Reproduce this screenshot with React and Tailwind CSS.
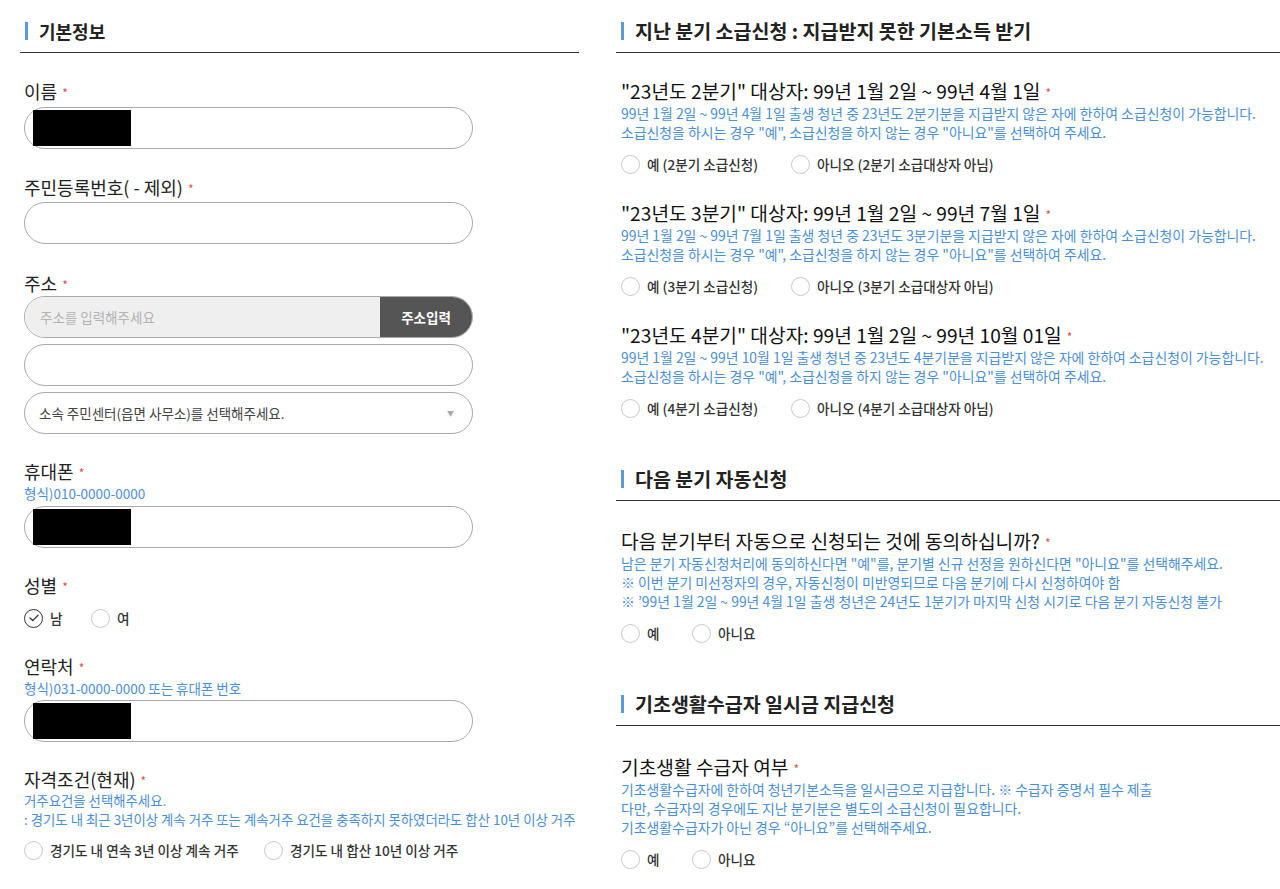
const FONT = { fontFamily: '"Noto Sans CJK KR", "Noto Sans", sans-serif' }

function Star() {
  return <span className="relative -top-[1px] ml-[5px] text-[12px] leading-none text-[#d9534f]">*</span>
}

function SectionHead({ title, size, className = '' }) {
  return (
    <div className={`border-b border-[#333] pb-[10px] ${className}`}>
      <div className="flex h-[22px] items-center">
        <div className="ml-[5px] h-[18px] w-[3px] bg-[#5b9bd5]" />
        <span className={`ml-[11px] font-bold leading-[22px] text-[#222] ${size}`}>{title}</span>
      </div>
    </div>
  )
}

function Radio({ label, checked, width }) {
  return (
    <div className="flex h-[20px] items-center" style={width ? { width } : undefined}>
      {checked ? (
        <div className="flex h-[19px] w-[19px] shrink-0 items-center justify-center rounded-full border border-[#333]">
          <svg width="10" height="8" viewBox="0 0 10 8" fill="none">
            <path d="M1 4l2.8 2.6L9 1.2" stroke="#333" strokeWidth="1.3" strokeLinecap="round" strokeLinejoin="round" />
          </svg>
        </div>
      ) : (
        <div className="h-[19px] w-[19px] shrink-0 rounded-full border border-[#c9c9c9]" />
      )}
      <span className="ml-[7px] whitespace-nowrap text-[13.6px] font-medium leading-[20px] text-[#333]">{label}</span>
    </div>
  )
}

function Hint({ lines, className = '' }) {
  return (
    <div className={`whitespace-nowrap leading-[19px] text-[#4a8fd8] ${className}`}>
      {lines.map(l => <div key={l}>{l}</div>)}
    </div>
  )
}

function Label({ text, className = '' }) {
  return (
    <div className={`h-[24px] text-[18px] leading-[24px] text-[#222] ${className}`}>
      {text}<Star />
    </div>
  )
}

function Masked({ className = '' }) {
  return (
    <div className={`flex h-[42px] w-[449px] items-center rounded-full border border-[#aaa] pl-[8px] ${className}`}>
      <div className="h-[36px] w-[98px] bg-black" />
    </div>
  )
}

function Empty({ className = '' }) {
  return <div className={`h-[42px] w-[449px] rounded-full border border-[#aaa] ${className}`} />
}

function Question({ text, hints, options, firstWidth, className = '' }) {
  return (
    <div className={className}>
      <div className="h-[26px] text-[19.2px] leading-[26px] text-[#111]">{text}<Star /></div>
      <Hint lines={hints} className="text-[13.9px]" />
      <div className="mt-[12px] flex">
        <Radio label={options[0]} width={firstWidth} />
        <Radio label={options[1]} />
      </div>
    </div>
  )
}

const quarters = [
  { q: '2', end: '4월 1일', hintEnd: '4월 1일' },
  { q: '3', end: '7월 1일', hintEnd: '7월 1일' },
  { q: '4', end: '10월 01일', hintEnd: '10월 1일' },
]

export default function App() {
  return (
    <div className="flex min-h-[889px] bg-white pl-[20px]" style={FONT}>
      <div className="w-[559px] pt-[20px]">
        <SectionHead title="기본정보" size="text-[18px]" />
        <div className="pl-[4px]">
          <Label text="이름" className="mt-[26px]" />
          <Masked className="mt-[4px]" />

          <Label text="주민등록번호( - 제외)" className="mt-[26px]" />
          <Empty className="mt-[3px]" />

          <Label text="주소" className="mt-[27px]" />
          <div className="mt-[1px] flex h-[42px] w-[449px] overflow-hidden rounded-full border border-[#aaa]">
            <div className="flex flex-1 items-center bg-[#efefef] pl-[15px] text-[13.5px] text-[#b3b3b3]">주소를 입력해주세요</div>
            <div className="flex w-[92px] items-center justify-center bg-[#555] text-[13.5px] font-bold text-white">주소입력</div>
          </div>
          <Empty className="mt-[6px]" />
          <div className="mt-[6px] flex h-[42px] w-[449px] items-center justify-between rounded-full border border-[#aaa] pl-[14px] pr-[18px] text-[13.5px] text-[#444]">
            <span>소속 주민센터(읍면 사무소)를 선택해주세요.</span>
            <span className="text-[7px] text-[#aaa]">▼</span>
          </div>

          <Label text="휴대폰" className="mt-[25px]" />
          <Hint lines={['형식)010-0000-0000']} className="text-[13.5px] leading-[20px]" />
          <Masked className="mt-[3px]" />

          <Label text="성별" className="mt-[25px]" />
          <div className="mt-[11px] flex">
            <Radio label="남" checked width={67} />
            <Radio label="여" />
          </div>

          <Label text="연락처" className="mt-[26px]" />
          <Hint lines={['형식)031-0000-0000 또는 휴대폰 번호']} className="text-[13.5px] leading-[20px]" />
          <Masked className="mt-[2px]" />

          <Label text="자격조건(현재)" className="mt-[25px]" />
          <Hint lines={['거주요건을 선택해주세요.', ': 경기도 내 최근 3년이상 계속 거주 또는 계속거주 요건을 충족하지 못하였더라도 합산 10년 이상 거주']} className="text-[13.4px]" />
          <div className="mt-[11px] flex">
            <Radio label="경기도 내 연속 3년 이상 계속 거주" width={240} />
            <Radio label="경기도 내 합산 10년 이상 거주" />
          </div>
        </div>
      </div>

      <div className="ml-[37px] flex-1 pt-[20px]">
        <SectionHead title="지난 분기 소급신청 : 지급받지 못한 기본소득 받기" size="text-[19.5px]" />
        <div className="pl-[5px]">
          {quarters.map((x, i) => (
            <Question
              key={x.q}
              className={i === 0 ? 'mt-[25px]' : 'mt-[26px]'}
              text={`"23년도 ${x.q}분기" 대상자: 99년 1월 2일 ~ 99년 ${x.end}`}
              hints={[
                `99년 1월 2일 ~ 99년 ${x.hintEnd} 출생 청년 중 23년도 ${x.q}분기분을 지급받지 않은 자에 한하여 소급신청이 가능합니다.`,
                '소급신청을 하시는 경우 "예", 소급신청을 하지 않는 경우 "아니요"를 선택하여 주세요.',
              ]}
              options={[`예 (${x.q}분기 소급신청)`, `아니오 (${x.q}분기 소급대상자 아님)`]}
              firstWidth={170}
            />
          ))}
        </div>

        <SectionHead title="다음 분기 자동신청" size="text-[19.5px]" className="mt-[50px]" />
        <div className="pl-[5px]">
          <Question
            className="mt-[27px]"
            text="다음 분기부터 자동으로 신청되는 것에 동의하십니까?"
            hints={[
              '남은 분기 자동신청처리에 동의하신다면 "예"를, 분기별 신규 선정을 원하신다면 "아니요"를 선택해주세요.',
              '※ 이번 분기 미선정자의 경우, 자동신청이 미반영되므로 다음 분기에 다시 신청하여야 함',
              '※ \u201999년 1월 2일 ~ 99년 4월 1일 출생 청년은 24년도 1분기가 마지막 신청 시기로 다음 분기 자동신청 불가',
            ]}
            options={['예', '아니요']}
            firstWidth={71}
          />
        </div>

        <SectionHead title="기초생활수급자 일시금 지급신청" size="text-[19.5px]" className="mt-[50px]" />
        <div className="pl-[5px]">
          <Question
            className="mt-[28px]"
            text="기초생활 수급자 여부"
            hints={[
              '기초생활수급자에 한하여 청년기본소득을 일시금으로 지급합니다. ※ 수급자 증명서 필수 제출',
              '다만, 수급자의 경우에도 지난 분기분은 별도의 소급신청이 필요합니다.',
              '기초생활수급자가 아닌 경우 \u201c아니요\u201d를 선택해주세요.',
            ]}
            options={['예', '아니요']}
            firstWidth={71}
          />
        </div>
      </div>
    </div>
  )
}
